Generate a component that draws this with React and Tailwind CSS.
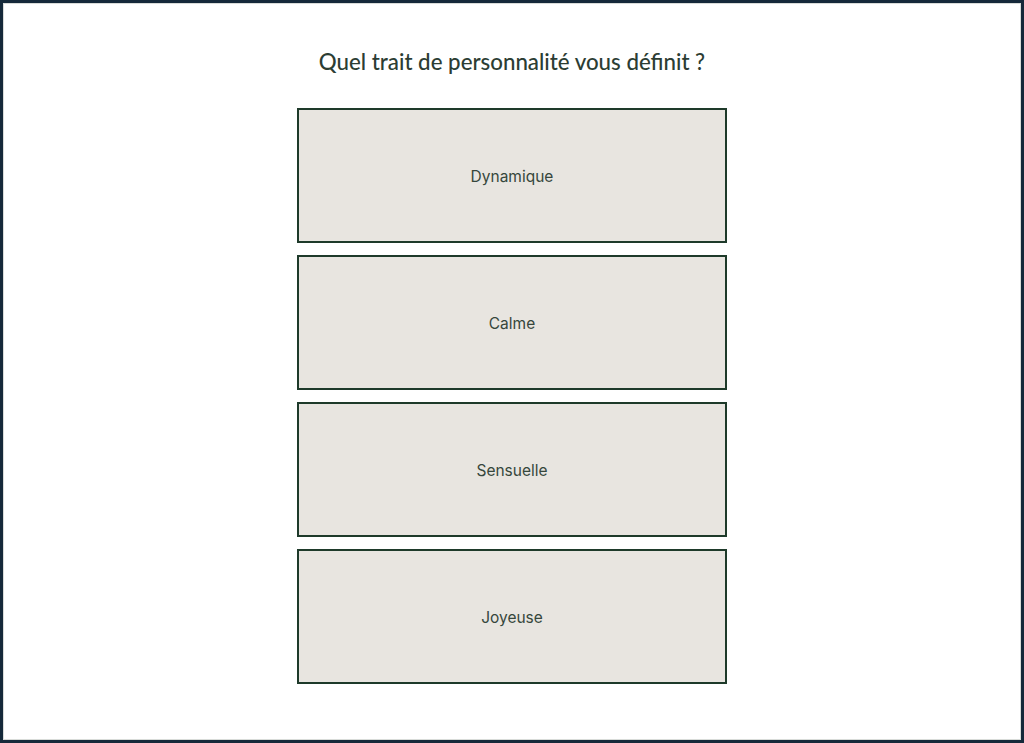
import React from "react";

const options = ["Dynamique", "Calme", "Sensuelle", "Joyeuse"];

export default function App() {
  return (
    <div className="h-[743px] w-full border-[3px] border-[#15293a] bg-white">
      <div className="flex h-full flex-col items-center border border-[#d9dcd9] pt-[42px]">
        <h1
          className="text-[22.3px] font-medium leading-[32px] text-[#2c3d33]"
          style={{ fontFamily: "Lato, 'Noto Sans', sans-serif" }}
        >
          Quel trait de personnalité vous définit ?
        </h1>
        <div className="mt-[30px] flex w-[430px] flex-col gap-3">
          {options.map((opt) => (
            <button
              key={opt}
              className="flex h-[135px] items-center justify-center border-2 border-[#1e3a2a] bg-[#e8e5e0] pt-[2px] text-[15.5px] text-[#36473c]"
              style={{ fontFamily: "Inter, 'Noto Sans', sans-serif" }}
            >
              {opt}
            </button>
          ))}
        </div>
      </div>
    </div>
  );
}
